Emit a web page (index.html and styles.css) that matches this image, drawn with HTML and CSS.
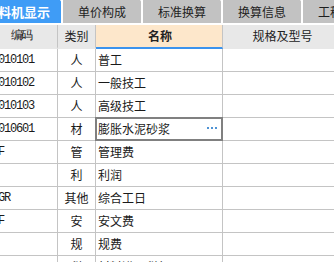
FILE: index.html
```html
<!DOCTYPE html>
<html lang="zh">
<head>
<meta charset="utf-8">
<link rel="stylesheet" href="styles.css">
</head>
<body>
<div class="page">
  <div class="tabs">
    <div class="tab active">工料机显示</div>
    <div class="tab">单价构成</div>
    <div class="tab">标准换算</div>
    <div class="tab">换算信息</div>
    <div class="tab">工程量明细</div>
  </div>
  <div class="grid">
    <div class="row head">
      <div class="c code">编码</div>
      <div class="c cat">类别</div>
      <div class="c name sorted">名称</div>
      <div class="c spec">规格及型号</div>
    </div>
    <div class="row"><div class="c code">00010101</div><div class="c cat">人</div><div class="c name">普工</div><div class="c spec"></div></div>
    <div class="row"><div class="c code">00010102</div><div class="c cat">人</div><div class="c name">一般技工</div><div class="c spec"></div></div>
    <div class="row"><div class="c code">00010103</div><div class="c cat">人</div><div class="c name">高级技工</div><div class="c spec"></div></div>
    <div class="row"><div class="c code">80010601</div><div class="c cat">材</div><div class="c name selected">膨胀水泥砂浆<span class="dots"><i></i><i></i><i></i></span></div><div class="c spec"></div></div>
    <div class="row"><div class="c code">GLF</div><div class="c cat">管</div><div class="c name">管理费</div><div class="c spec"></div></div>
    <div class="row"><div class="c code"></div><div class="c cat">利</div><div class="c name">利润</div><div class="c spec"></div></div>
    <div class="row"><div class="c code">ZHGR</div><div class="c cat">其他</div><div class="c name">综合工日</div><div class="c spec"></div></div>
    <div class="row"><div class="c code">AWF</div><div class="c cat">安</div><div class="c name">安文费</div><div class="c spec"></div></div>
    <div class="row"><div class="c code"></div><div class="c cat">规</div><div class="c name">规费</div><div class="c spec"></div></div>
    <div class="row"><div class="c code"></div><div class="c cat">税</div><div class="c name">材料进项税额</div><div class="c spec"></div></div>
  </div>
</div>
</body>
</html>
```

FILE: styles.css
```css
* { box-sizing: border-box; }
html, body { margin: 0; padding: 0; background: #fff; }
body {
  font-family: "Noto Sans CJK SC", "Liberation Sans", sans-serif;
  font-size: 12px;
  color: #1a1a1a;
}
.page { width: 334px; height: 262px; overflow: hidden; }

.tabs {
  display: flex;
  height: 23px;
  margin-left: -30px;
  white-space: nowrap;
}
.tab {
  position: relative;
  flex: none;
  height: 23px;
  line-height: 23px;
  padding: 0 15px;
  background: #c2c2c2;
  color: #1e1e1e;
  margin-right: 2px;
}
.tab::after {
  content: "";
  position: absolute;
  right: -3px;
  top: 0;
  width: 4px;
  height: 3px;
  background: #fff;
  clip-path: polygon(0 0, 100% 0, 50% 100%);
}
.tab.active {
  background: #3f9cf6;
  color: #fff;
  font-weight: bold;
  font-size: 13px;
  padding: 0 11px 0 15px;
}

.grid { margin-top: 2px; }
.row {
  display: grid;
  grid-template-columns: 75px 38px 127px 120px;
  height: 23px;
  margin-left: -17px;
}
.c {
  border-right: 1px solid #c4c4c4;
  border-bottom: 1px solid #c4c4c4;
  line-height: 22px;
  white-space: nowrap;
  overflow: hidden;
}
.head { height: 24px; }
.head .c {
  background: #e8e8e8;
  text-align: center;
  color: #222;
  border-bottom: 2px solid #e8e8e8;
  line-height: 22px;
}
.head .c.sorted {
  background: #fde7cb;
  font-weight: bold;
  border-bottom: 2px solid #3b93ee;
}
.code {
  padding-left: 3px;
  font-family: "Liberation Mono", monospace;
  letter-spacing: -1.2px;
  font-size: 12px;
}
.cat { text-align: center; }
.name { padding-left: 2px; position: relative; overflow: visible; }
.selected::after {
  content: "";
  position: absolute;
  left: -1px;
  top: -1px;
  right: -1px;
  bottom: -1px;
  border: 2px solid #808080;
}
.dots {
  position: absolute;
  left: 111px;
  top: 9px;
  display: flex;
  gap: 2px;
}
.dots i {
  width: 2px;
  height: 2px;
  background: #4f93d4;
}
```
